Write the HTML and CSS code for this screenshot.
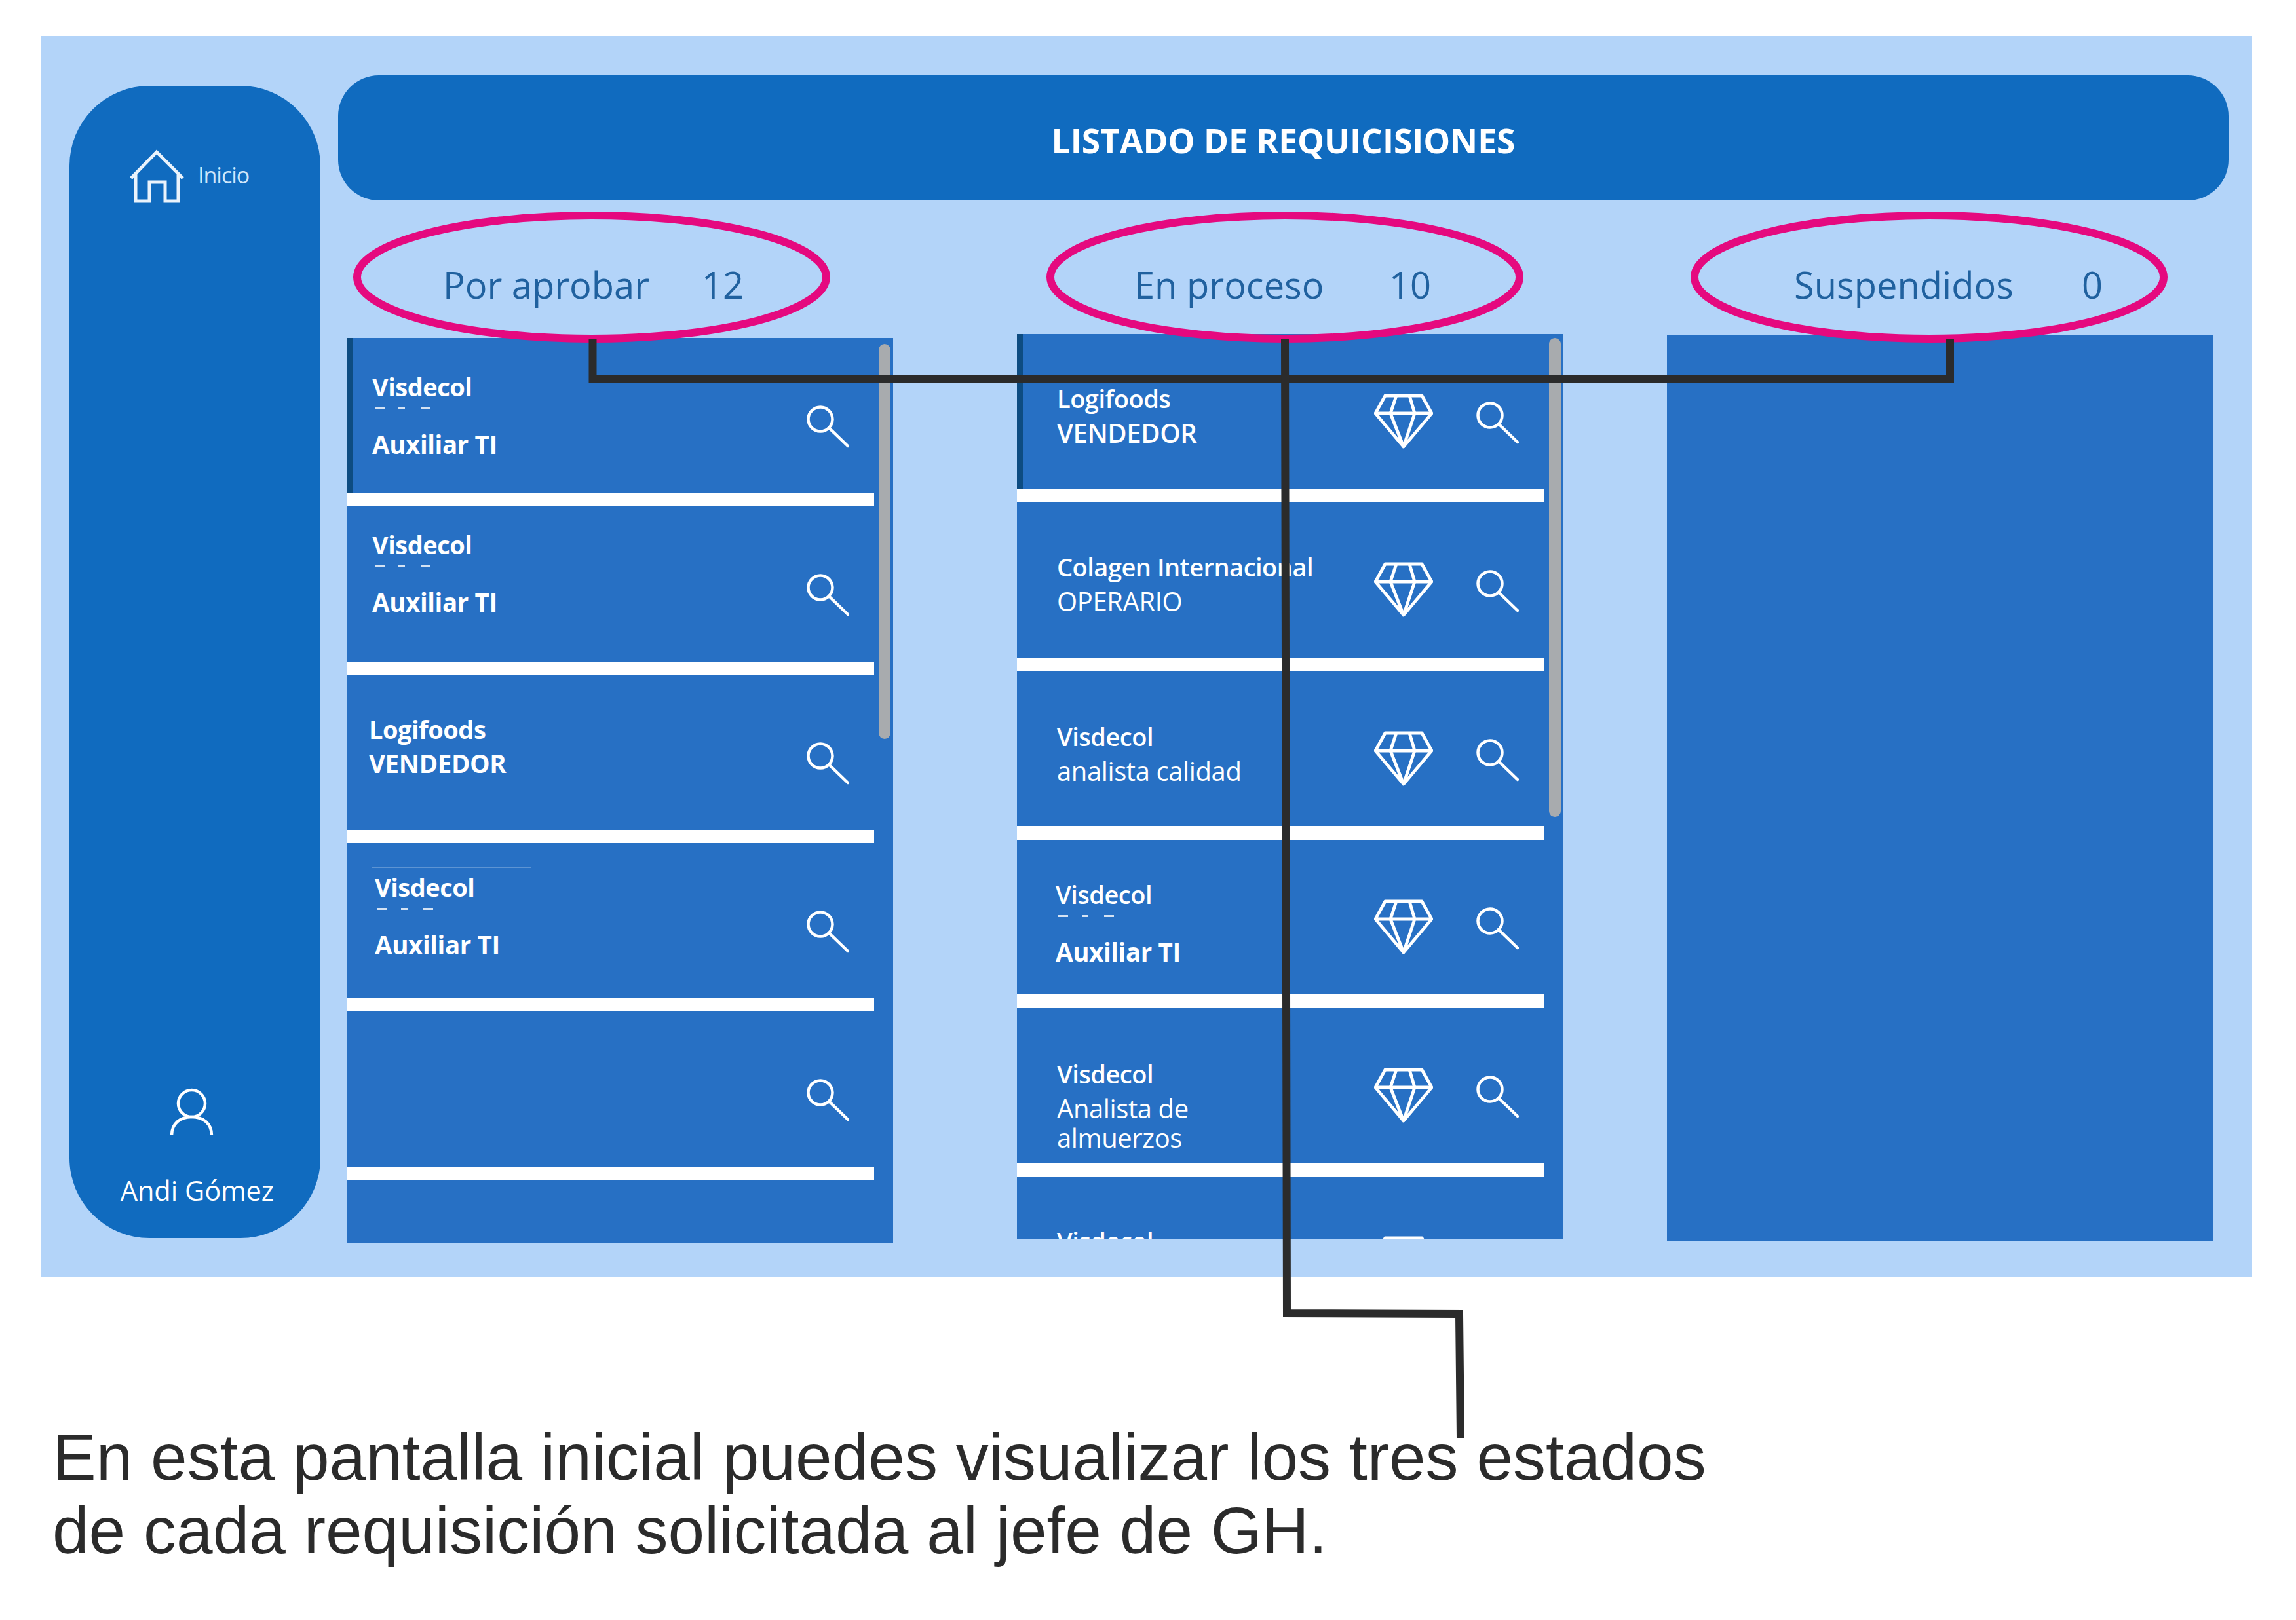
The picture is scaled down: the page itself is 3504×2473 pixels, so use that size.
FILE: index.html
```html
<!DOCTYPE html>
<html lang="es">
<head>
    <meta charset="UTF-8">
    <title>Listado de requisiciones</title>
    <link rel="stylesheet" href="styles.css">
</head>
<body>
    <svg class="icon-defs" width="0" height="0">
        <symbol id="icon-search" viewBox="0 0 66 66">
            <circle cx="22" cy="21" r="18.5" fill="none" stroke="currentColor" stroke-width="4.5"/>
            <path d="M35 34 L64 62" fill="none" stroke="currentColor" stroke-width="4.5" stroke-linecap="round"/>
        </symbol>
        <symbol id="icon-diamond" viewBox="0 0 90 84">
            <path d="M17 3 H73 L88 30 L45 81 L2 30 Z M2 30 H88 M34 3 L25 30 L45 81 L62 30 L54 3" fill="none" stroke="currentColor" stroke-width="4.8" stroke-linejoin="round"/>
        </symbol>
    </svg>

    <div class="frame">
        <aside class="sidebar">
            <div class="nav-home">
                <svg class="icon-home" viewBox="0 0 90 85">
                    <path d="M5 45 L44 5 L84 45 M12 39 V80 H33 V51 H57 V80 H77 V39" fill="none" stroke="currentColor" stroke-width="5"/>
                </svg>
                <span class="nav-label">Inicio</span>
            </div>
            <div class="nav-user">
                <svg class="icon-user" viewBox="0 0 75 80">
                    <circle cx="37.5" cy="26.5" r="20.5" fill="none" stroke="currentColor" stroke-width="4.5"/>
                    <path d="M7 75 C7 57 20 47 37.5 47 S68 57 68 75" fill="none" stroke="currentColor" stroke-width="4.5"/>
                </svg>
                <span class="user-name">Andi Gómez</span>
            </div>
        </aside>

        <main class="main">
            <header class="title-bar">LISTADO DE REQUICISIONES</header>

            <div class="boards">
                <section class="board board-pending">
                    <div class="status"><span class="status-label">Por aprobar</span><span>12</span></div>
                    <div class="list">
                        <div class="card card-active">
                            <div class="card-text">
                                <div class="rule"></div>
                                <div class="name">Visdecol</div>
                                <div class="dashes"></div>
                                <div class="role role-bold">Auxiliar TI</div>
                            </div>
                            <div class="card-icons"><svg class="icon-search"><use href="#icon-search"/></svg></div>
                        </div>
                        <div class="card">
                            <div class="card-text">
                                <div class="rule"></div>
                                <div class="name">Visdecol</div>
                                <div class="dashes"></div>
                                <div class="role role-bold">Auxiliar TI</div>
                            </div>
                            <div class="card-icons"><svg class="icon-search"><use href="#icon-search"/></svg></div>
                        </div>
                        <div class="card">
                            <div class="card-text">
                                <div class="name">Logifoods</div>
                                <div class="role role-bold">VENDEDOR</div>
                            </div>
                            <div class="card-icons"><svg class="icon-search"><use href="#icon-search"/></svg></div>
                        </div>
                        <div class="card">
                            <div class="card-text">
                                <div class="rule"></div>
                                <div class="name">Visdecol</div>
                                <div class="dashes"></div>
                                <div class="role role-bold">Auxiliar TI</div>
                            </div>
                            <div class="card-icons"><svg class="icon-search"><use href="#icon-search"/></svg></div>
                        </div>
                        <div class="card">
                            <div class="card-text"></div>
                            <div class="card-icons"><svg class="icon-search"><use href="#icon-search"/></svg></div>
                        </div>
                        <div class="scroll-thumb"></div>
                    </div>
                </section>

                <section class="board board-process">
                    <div class="status"><span class="status-label">En proceso</span><span>10</span></div>
                    <div class="list">
                        <div class="card card-active">
                            <div class="card-text">
                                <div class="name">Logifoods</div>
                                <div class="role role-semi">VENDEDOR</div>
                            </div>
                            <div class="card-icons">
                                <svg class="icon-diamond"><use href="#icon-diamond"/></svg>
                                <svg class="icon-search"><use href="#icon-search"/></svg>
                            </div>
                        </div>
                        <div class="card">
                            <div class="card-text">
                                <div class="name">Colagen Internacional</div>
                                <div class="role">OPERARIO</div>
                            </div>
                            <div class="card-icons">
                                <svg class="icon-diamond"><use href="#icon-diamond"/></svg>
                                <svg class="icon-search"><use href="#icon-search"/></svg>
                            </div>
                        </div>
                        <div class="card">
                            <div class="card-text">
                                <div class="name">Visdecol</div>
                                <div class="role">analista calidad</div>
                            </div>
                            <div class="card-icons">
                                <svg class="icon-diamond"><use href="#icon-diamond"/></svg>
                                <svg class="icon-search"><use href="#icon-search"/></svg>
                            </div>
                        </div>
                        <div class="card">
                            <div class="card-text">
                                <div class="rule"></div>
                                <div class="name">Visdecol</div>
                                <div class="dashes"></div>
                                <div class="role role-bold">Auxiliar TI</div>
                            </div>
                            <div class="card-icons">
                                <svg class="icon-diamond"><use href="#icon-diamond"/></svg>
                                <svg class="icon-search"><use href="#icon-search"/></svg>
                            </div>
                        </div>
                        <div class="card">
                            <div class="card-text">
                                <div class="name">Visdecol</div>
                                <div class="role">Analista de<br>almuerzos</div>
                            </div>
                            <div class="card-icons">
                                <svg class="icon-diamond"><use href="#icon-diamond"/></svg>
                                <svg class="icon-search"><use href="#icon-search"/></svg>
                            </div>
                        </div>
                        <div class="card">
                            <div class="card-text">
                                <div class="name">Visdecol</div>
                            </div>
                            <div class="card-icons">
                                <svg class="icon-diamond"><use href="#icon-diamond"/></svg>
                                <svg class="icon-search"><use href="#icon-search"/></svg>
                            </div>
                        </div>
                        <div class="scroll-thumb"></div>
                    </div>
                </section>

                <section class="board board-suspended">
                    <div class="status"><span class="status-label">Suspendidos</span><span>0</span></div>
                    <div class="list"></div>
                </section>
            </div>
        </main>
    </div>

    <p class="caption">En esta pantalla inicial puedes visualizar los tres estados<br>de cada requisición solicitada al jefe de GH.</p>

    <!-- pink circles and connector lines drawn over the screenshot -->
    <svg class="annotations" viewBox="0 0 3504 2473">
        <ellipse cx="903" cy="423" rx="358" ry="94"/>
        <ellipse cx="1961" cy="423" rx="358" ry="94"/>
        <ellipse cx="2944" cy="423" rx="358" ry="94"/>
        <polyline points="904.5,518 904.5,579 2976,579 2976,517"/>
        <polyline points="1961,517 1964,2005 2227,2006 2229,2195"/>
    </svg>
</body>
</html>
```

FILE: styles.css
```css
* {
    box-sizing: border-box;
}

body {
    position: relative;
    height: 2473px;
    margin: 0;
    padding: 55px 0 0 63px;
    background-color: #fff;
    font-family: "Open Sans", sans-serif;
    overflow: hidden;
}

.icon-defs {
    position: absolute;
}

.frame {
    display: flex;
    align-items: flex-start;
    width: 3374px;
    height: 1895px;
    padding: 60px 0 0 43px;
    background-color: #b3d4f9;
}

/* side menu */
.sidebar {
    display: flex;
    flex-direction: column;
    justify-content: space-between;
    width: 383px;
    height: 1759px;
    margin-top: 16px;
    padding: 96px 0 48px;
    background-color: #106bbf;
    border-radius: 122px;
    color: #fff;
}

.nav-home {
    display: flex;
    align-items: center;
    gap: 17px;
    padding-left: 89px;
}

.icon-home {
    width: 90px;
    height: 85px;
    color: #eaf3fc;
}

.nav-label {
    margin-top: -6px;
    color: #cfe6fa;
    font-size: 34px;
    font-weight: 500;
    letter-spacing: -1px;
}

.nav-user {
    display: flex;
    flex-direction: column;
    align-items: center;
    gap: 54px;
}

.icon-user {
    width: 75px;
    height: 80px;
    margin-right: 10px;
}

.user-name {
    padding-left: 7px;
    font-size: 41.5px;
    line-height: 50px;
}

/* main area */
.main {
    width: 2885px;
    margin-left: 27px;
}

.title-bar {
    height: 191px;
    background-color: #106bbf;
    border-radius: 62px;
    color: #fff;
    font-size: 51.5px;
    font-weight: 700;
    line-height: 198px;
    text-align: center;
}

.boards {
    display: flex;
    padding: 98px 0 0 14px;
}

.board {
    width: 833px;
}

.board-process {
    width: 834px;
    margin-left: 189px;
}

.board-suspended {
    margin-left: 158px;
}

.status {
    display: flex;
    color: #20619f;
    font-size: 56px;
    font-weight: 500;
    line-height: 60px;
}

.board-pending .status {
    padding-left: 146px;
}

.board-pending .status-label {
    width: 395px;
}

.board-process .status {
    padding-left: 179px;
}

.board-process .status-label {
    width: 389px;
}

.board-suspended .status {
    padding-left: 194px;
}

.board-suspended .status-label {
    width: 439px;
}

.list {
    position: relative;
    height: 1382px;
    margin-top: 52px;
    background-color: #2770c4;
    overflow: hidden;
}

.board-process .list {
    height: 1381px;
    margin-top: 46px;
}

.board-suspended .list {
    height: 1384px;
    margin-top: 47px;
}

.scroll-thumb {
    position: absolute;
    top: 9px;
    left: 811px;
    width: 18px;
    height: 603px;
    background-color: #a8abae;
    border-radius: 9px;
}

.board-process .scroll-thumb {
    top: 6px;
    left: 812px;
    height: 731px;
}

/* cards */
.card {
    display: flex;
    justify-content: space-between;
    width: 804px;
    height: 257px;
    border-bottom: 20px solid #fff;
    color: #fff;
}

.board-process .card {
    height: 257.25px;
    border-bottom-width: 21px;
}

.card-active {
    box-shadow: inset 9px 0 0 #0d4c82;
}

.card-text {
    padding-left: 38px;
}

.rule {
    width: 243px;
    height: 1px;
    margin: 0 0 3px -4px;
    background-color: rgba(255, 255, 255, 0.25);
}

.name {
    font-size: 38px;
    font-weight: 650;
    letter-spacing: -0.5px;
    line-height: 52px;
    white-space: nowrap;
}

.board-pending .name {
    font-weight: 700;
}

.dashes {
    width: 85px;
    height: 3px;
    margin: 6px 0 0 4px;
    background: linear-gradient(90deg, #fff 15px, transparent 15px, transparent 36px, #fff 36px, #fff 46px, transparent 46px, transparent 70px, #fff 70px);
    opacity: 0.8;
}

.role {
    margin-top: 4px;
    font-size: 40px;
    font-weight: 500;
    letter-spacing: -0.4px;
    line-height: 45px;
}

.dashes + .role {
    margin-top: 31px;
}

.role-bold {
    font-size: 38.5px;
    font-weight: 700;
}

.role-semi {
    font-weight: 600;
}

.card-icons {
    display: flex;
    align-items: flex-start;
    padding-right: 38px;
}

.icon-search {
    width: 66px;
    height: 66px;
    margin-top: 103px;
}

.icon-diamond {
    width: 90px;
    height: 84px;
    margin: 91px 65px 0 0;
}

/* text offsets differ from card to card */
.board-pending .card:nth-child(1) .card-text {
    padding-top: 44px;
}

.board-pending .card:nth-child(2) .card-text {
    padding-top: 28px;
}

.board-pending .card:nth-child(3) .card-text {
    padding: 57px 0 0 33px;
}

.board-pending .card:nth-child(4) .card-text {
    padding: 37px 0 0 42px;
}

.board-process .card-text {
    padding: 72px 0 0 61px;
}

.board-process .card:nth-child(3) .card-text {
    padding-top: 73px;
}

.board-process .card:nth-child(4) .card-text {
    padding: 53px 0 0 59px;
}

.board-process .card:nth-child(5) .card-text {
    padding-top: 74px;
}

/* caption under the screenshot */
.caption {
    margin: 218px 0 0 17px;
    color: #2b2b2b;
    font-family: "Liberation Sans", Arial, sans-serif;
    font-size: 100px;
    line-height: 112px;
    white-space: nowrap;
}

.annotations {
    position: absolute;
    top: 0;
    left: 0;
    width: 3504px;
    height: 2473px;
    fill: none;
    pointer-events: none;
}

.annotations ellipse {
    stroke: #e5097f;
    stroke-width: 12;
}

.annotations polyline {
    stroke: #2b2b2b;
    stroke-width: 12;
}
```
